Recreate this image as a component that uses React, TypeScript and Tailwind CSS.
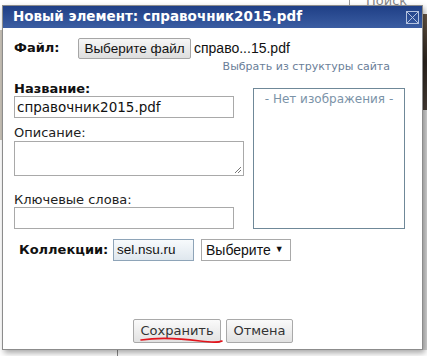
import React from "react";

const verdana = "font-['DejaVu_Sans',Verdana,sans-serif]";
const arial = "font-['Liberation_Sans',Arial,sans-serif]";

function Field({ label, children }: { label: React.ReactNode; children: React.ReactNode }) {
  return (
    <div>
      <div className="h-[16px] leading-[16px] text-[13px] text-[#222]">{label}</div>
      {children}
    </div>
  );
}

export default function App() {
  return (
    <div className={`relative w-[427px] h-[356px] bg-white overflow-hidden ${verdana}`}>
      {/* page behind the dialog */}
      <div className="absolute left-[349px] top-0 h-[6px] w-px bg-[#999]" />
      <div className="absolute left-[366px] top-[-9px] text-[13px] text-[#888]">Поиск</div>
      <div className="absolute right-0 top-[14px] h-[96px] w-[6px] bg-gradient-to-b from-[#6b5a48] via-[#2e2620] to-[#4a4038]" />
      <div className="absolute right-0 top-[110px] h-[240px] w-[6px] bg-[#d8d8d8]" />
      <div className="absolute left-[117px] top-[349px] h-[8px] w-px bg-[#888]" />
      <div className="absolute left-0 top-[30px] h-[110px] w-[2px] bg-[#c9c3b8]" />

      {/* dialog */}
      <div className="absolute left-[2px] top-[5px] w-[421px] h-[345px] border border-[#8c8c8c] bg-white shadow-[2px_3px_6px_rgba(0,0,0,0.35)] flex flex-col">
        <div className="h-[22px] flex items-center justify-between bg-gradient-to-b from-[#1f3f86] to-[#3b5da2] pl-[10px] pr-[3px]">
          <span className="text-white font-bold text-[13.5px] leading-none">Новый элемент: справочник2015.pdf</span>
          <svg width="13" height="13" viewBox="0 0 13 13" className="mt-[1px]">
            <rect x="0.5" y="0.5" width="12" height="12" fill="none" stroke="#b3c2df" />
            <path d="M1 1L12 12M12 1L1 12" stroke="#b3c2df" strokeWidth="1" />
          </svg>
        </div>

        <div className="flex-1 flex flex-col pl-[11px] pr-[17px]">
          <div className="mt-[10px] flex items-center h-[20px]">
            <span className="w-[64px] text-[13px] font-bold text-[#111]">Файл:</span>
            <button className={`h-[21px] w-[113px] border border-[#a6a6a6] rounded-[2px] bg-gradient-to-b from-[#f6f6f6] to-[#dedede] text-[13.5px] text-[#111] ${arial}`}>
              Выберите файл
            </button>
            <span className={`ml-[3px] text-[14px] text-[#111] ${arial}`}>справо...15.pdf</span>
          </div>
          <div className="mt-[2px] flex justify-end pr-[15px]">
            <a className="text-[11px] leading-[14px] text-[#6a7e98]">Выбрать из структуры сайта</a>
          </div>

          <div className="mt-[7px] flex gap-[9px]">
            <div className="w-[230px] flex flex-col">
              <Field label={<b className="font-bold text-[#111]">Название:</b>}>
                <div className="mt-[-1px] h-[22px] w-[220px] border border-[#a9a9a9] px-[2px] text-[13.5px] leading-[20px] text-[#111]">
                  справочник2015.pdf
                </div>
              </Field>
              <div className="mt-[7px]">
                <Field label="Описание:">
                  <div className="relative h-[35px] w-[230px] border border-[#a9a9a9]">
                    <svg width="8" height="8" viewBox="0 0 8 8" className="absolute right-[1px] bottom-[1px]">
                      <path d="M7 1L1 7M7 4L4 7" stroke="#777" strokeWidth="1" />
                    </svg>
                  </div>
                </Field>
              </div>
              <div className="mt-[16px]">
                <Field label="Ключевые слова:">
                  <div className="mt-[-1px] h-[22px] w-[220px] border border-[#a9a9a9]" />
                </Field>
              </div>
            </div>
            <div className="mt-[7px] w-[152px] h-[141px] border border-[#6f8898] text-center text-[12px] leading-[14px] pt-[3px] text-[#7b93a8]">
              - Нет изображения -
            </div>
          </div>

          <div className="mt-[10px] flex items-center h-[22px] pl-[5px]">
            <span className="w-[94px] text-[13px] font-bold text-[#111]">Коллекции:</span>
            <div className={`h-[22px] w-[81px] border border-[#8ea4b8] bg-gradient-to-b from-[#f7fafc] to-[#dfe7ee] px-[3px] text-[13.5px] leading-[20px] text-[#111] ${arial}`}>
              sel.nsu.ru
            </div>
            <div className={`ml-[7px] h-[22px] w-[90px] border border-[#a9a9a9] flex items-center pl-[4px] gap-[4px] text-[14px] text-[#111] ${arial}`}>
              <span>Выберите</span>
              <span className="text-[9px]">▼</span>
            </div>
          </div>

          <div className="mt-auto mb-[6px] flex justify-center gap-[5px] ml-[7px]">
            <button className="relative h-[24px] w-[88px] border border-[#a9a9a9] rounded-[2px] bg-gradient-to-b from-[#fafafa] to-[#e2e2e2] text-[13px] text-[#333]">
              Сохранить
              <svg width="90" height="8" viewBox="0 0 90 8" className="absolute left-[6px] top-[17px] overflow-visible">
                <path d="M1 3 C 20 0, 45 2, 60 4 S 80 5, 82 4" fill="none" stroke="#e3141c" strokeWidth="1.6" strokeLinecap="round" />
              </svg>
            </button>
            <button className="h-[24px] w-[67px] border border-[#a9a9a9] rounded-[2px] bg-gradient-to-b from-[#fafafa] to-[#e2e2e2] text-[13px] text-[#333]">
              Отмена
            </button>
          </div>
        </div>
      </div>
    </div>
  );
}
